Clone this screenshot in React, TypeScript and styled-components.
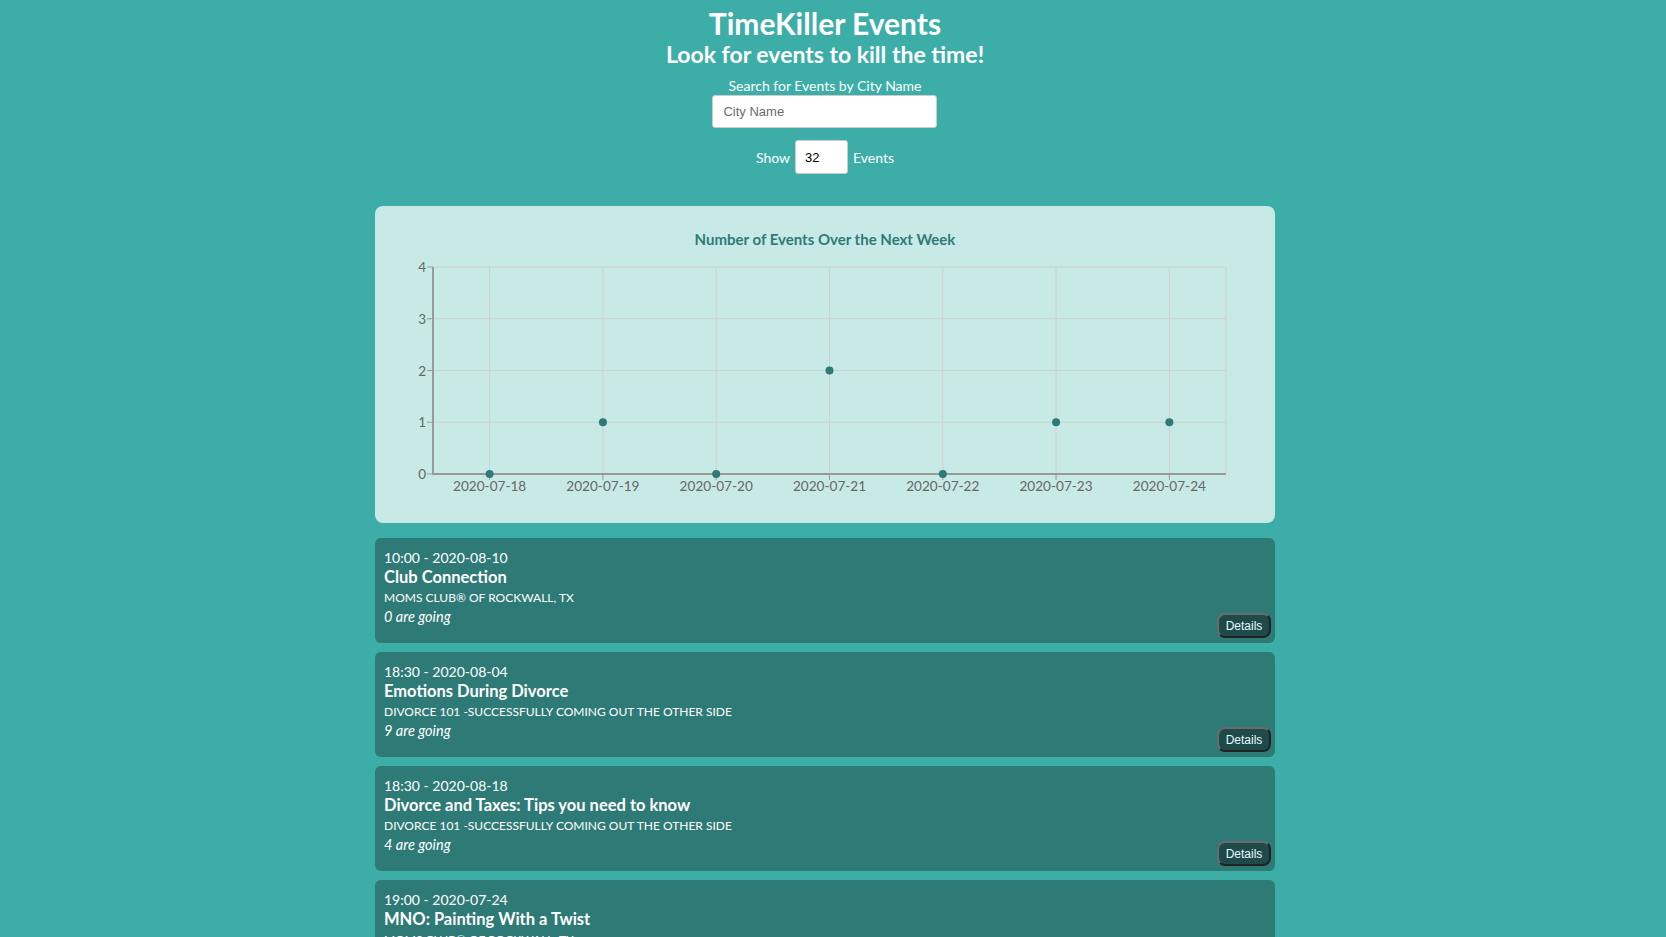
import React from 'react';
import styled, { createGlobalStyle } from 'styled-components';

const GlobalStyle = createGlobalStyle`
  body {
    margin: 0;
    background-color: #3caea7;
    font-family: 'Lato', 'Noto Sans', sans-serif;
    color: #ffffff;
  }
`

type EventItem = {
    time: string;
    name: string;
    group: string;
    going: number;
};

const events: Array<EventItem> = [
    { time: '10:00 - 2020-08-10', name: 'Club Connection', group: 'MOMS CLUB® OF ROCKWALL, TX', going: 0 },
    { time: '18:30 - 2020-08-04', name: 'Emotions During Divorce', group: 'DIVORCE 101 -SUCCESSFULLY COMING OUT THE OTHER SIDE', going: 9 },
    { time: '18:30 - 2020-08-18', name: 'Divorce and Taxes: Tips you need to know', group: 'DIVORCE 101 -SUCCESSFULLY COMING OUT THE OTHER SIDE', going: 4 },
    { time: '19:00 - 2020-07-24', name: 'MNO: Painting With a Twist', group: 'MOMS CLUB® OF ROCKWALL, TX', going: 6 },
];

const chartData = [
    { date: '2020-07-18', count: 0 },
    { date: '2020-07-19', count: 1 },
    { date: '2020-07-20', count: 0 },
    { date: '2020-07-21', count: 2 },
    { date: '2020-07-22', count: 0 },
    { date: '2020-07-23', count: 1 },
    { date: '2020-07-24', count: 1 },
];

const EventsChart = () => {
    const left = 58;
    const right = 851;
    const top = 61;
    const bottom = 268;
    const band = (right - left) / chartData.length;
    const yOf = (v: number) => bottom - (v / 4) * (bottom - top);
    const xOf = (i: number) => left + band * i + band / 2;
    return (
        <svg width="900" height="317" viewBox="0 0 900 317">
            <text x="450" y="39" textAnchor="middle" fontSize="15" fontWeight="700" fill="#2e7b77" fontFamily="Lato, sans-serif">
                Number of Events Over the Next Week
            </text>
            {[1, 2, 3, 4].map(v => (
                <line key={v} x1={left} x2={right} y1={yOf(v)} y2={yOf(v)} stroke="#cfcfcf" strokeWidth="1" />
            ))}
            {chartData.map((d, i) => (
                <line key={d.date} x1={xOf(i)} x2={xOf(i)} y1={top} y2={bottom} stroke="#cfcfcf" strokeWidth="1" />
            ))}
            <line x1={right} x2={right} y1={top} y2={bottom} stroke="#cfcfcf" strokeWidth="1" />
            <line x1={left} x2={left} y1={top} y2={bottom} stroke="#999" strokeWidth="2" />
            <line x1={left - 1} x2={right} y1={bottom} y2={bottom} stroke="#999" strokeWidth="2" />
            {[0, 1, 2, 3, 4].map(v => (
                <g key={v}>
                    <line x1={left - 6} x2={left} y1={yOf(v)} y2={yOf(v)} stroke="#999" strokeWidth="1" />
                    <text x={left - 7} y={yOf(v) + 5} textAnchor="end" fontSize="13.5" fill="#666" fontFamily="Lato, sans-serif">{v}</text>
                </g>
            ))}
            {chartData.map((d, i) => (
                <g key={d.date}>
                    <line x1={xOf(i)} x2={xOf(i)} y1={bottom} y2={bottom + 6} stroke="#999" strokeWidth="1" />
                    <text x={xOf(i)} y={bottom + 17} textAnchor="middle" fontSize="13.6" fill="#666" fontFamily="Lato, sans-serif">{d.date}</text>
                    <circle cx={xOf(i)} cy={yOf(d.count)} r="4" fill="#2e7a76" />
                </g>
            ))}
        </svg>
    );
};

const App = () => {
    return (
        <Page>
            <GlobalStyle />
            <Header>
                <Title>TimeKiller Events</Title>
                <Subtitle>Look for events to kill the time!</Subtitle>
                <SearchLabel>Search for Events by City Name</SearchLabel>
                <CityInput placeholder="City Name" />
                <ShowRow>
                    <span>Show</span>
                    <NumberInput defaultValue="32" />
                    <span>Events</span>
                </ShowRow>
            </Header>
            <ChartCard>
                <EventsChart />
            </ChartCard>
            <EventList>
                {events.map((ev, index) => (
                    <EventCard key={index}>
                        <EventTime>{ev.time}</EventTime>
                        <EventName>{ev.name}</EventName>
                        <EventGroup>{ev.group}</EventGroup>
                        <EventGoing>{ev.going} are going</EventGoing>
                        <DetailsButton>Details</DetailsButton>
                    </EventCard>
                ))}
            </EventList>
        </Page>
    );
};

export default App;

const Page = styled.div`
    display: flex;
    flex-direction: column;
    align-items: center;
    padding-right: 16px;
`
const Header = styled.header`
    display: flex;
    flex-direction: column;
    align-items: center;
`
const Title = styled.h1`
    margin: 4px 0 0;
    font-size: 30px;
    line-height: 38px;
    font-weight: 700;
`
const Subtitle = styled.h2`
    margin: -1px 0 0;
    font-size: 23px;
    line-height: 26px;
    font-weight: 700;
`
const SearchLabel = styled.label`
    margin-top: 10px;
    font-size: 14px;
    line-height: 18px;
`
const CityInput = styled.input`
    box-sizing: border-box;
    width: 225px;
    height: 33px;
    padding: 0 10px;
    border: 1px solid #ccc;
    border-radius: 3px;
    font-family: 'Liberation Sans', Arial, sans-serif;
    font-size: 13px;
    color: #333;
    &::placeholder {
        color: #6b6b6b;
    }
`
const ShowRow = styled.div`
    display: flex;
    align-items: center;
    gap: 5px;
    margin-top: 12px;
    font-size: 14px;
`
const NumberInput = styled.input`
    box-sizing: border-box;
    width: 53px;
    height: 34px;
    padding: 0 9px;
    border: 1px solid #ccc;
    border-radius: 3px;
    font-family: 'Liberation Sans', Arial, sans-serif;
    font-size: 13px;
    color: #000;
`
const ChartCard = styled.section`
    box-sizing: border-box;
    width: 900px;
    height: 317px;
    margin-top: 32px;
    background-color: #c8eae7;
    border-radius: 8px;
    overflow: hidden;
`
const EventList = styled.div`
    display: flex;
    flex-direction: column;
    gap: 9px;
    margin-top: 15px;
    width: 900px;
`
const EventCard = styled.article`
    position: relative;
    box-sizing: border-box;
    height: 105px;
    padding: 10px 9px;
    background-color: #2e7a77;
    border-radius: 6px;
    display: flex;
    flex-direction: column;
`
const EventTime = styled.div`
    font-size: 14px;
    line-height: 19px;
`
const EventName = styled.div`
    font-size: 16.5px;
    font-weight: 700;
    line-height: 21px;
`
const EventGroup = styled.div`
    font-size: 12px;
    line-height: 19px;
`
const EventGoing = styled.div`
    font-size: 14.5px;
    font-style: italic;
    line-height: 19px;
`
const DetailsButton = styled.button`
    position: absolute;
    right: 4px;
    bottom: 5px;
    box-sizing: border-box;
    width: 54px;
    height: 25px;
    padding: 0;
    background-color: #1f4a4a;
    border: 2px solid #6b6b6b;
    border-right-color: #222;
    border-bottom-color: #222;
    border-radius: 8px;
    color: #e6fbfb;
    font-family: 'Liberation Sans', Arial, sans-serif;
    font-size: 12px;
    cursor: pointer;
`
